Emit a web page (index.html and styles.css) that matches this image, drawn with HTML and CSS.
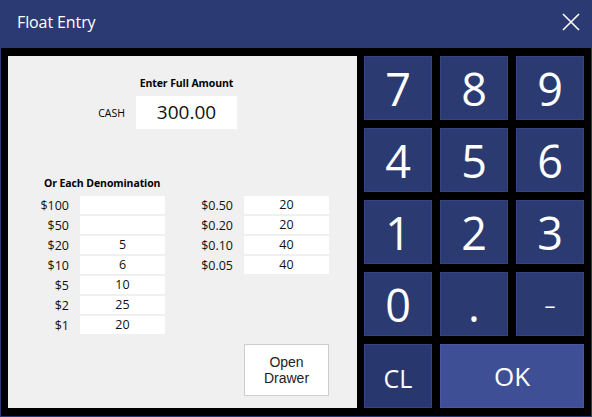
FILE: index.html
```html
<!DOCTYPE html>
<html>
<head>
<meta charset="utf-8">
<link rel="stylesheet" href="styles.css">
</head>
<body>
<div class="window">
  <div class="titlebar">
    <span class="title">Float Entry</span>
    <svg class="close" width="18" height="18" viewBox="0 0 18 18"><path d="M1 1 L17 17 M17 1 L1 17" stroke="#fff" stroke-width="1.6" fill="none"/></svg>
  </div>
  <div class="body">
    <div class="panel">
      <div class="full">
        <div></div>
        <div class="heading center">Enter Full Amount</div>
        <div class="cash-label">CASH</div>
        <div class="cash-input">300.00</div>
      </div>
      <div class="heading denom-heading">Or Each Denomination</div>
      <div class="denoms">
        <div class="denom-grid left">
          <div class="lbl">$100</div><div class="inp"></div>
          <div class="lbl">$50</div><div class="inp"></div>
          <div class="lbl">$20</div><div class="inp">5</div>
          <div class="lbl">$10</div><div class="inp">6</div>
          <div class="lbl">$5</div><div class="inp">10</div>
          <div class="lbl">$2</div><div class="inp">25</div>
          <div class="lbl">$1</div><div class="inp">20</div>
        </div>
        <div class="denom-grid right">
          <div class="lbl">$0.50</div><div class="inp">20</div>
          <div class="lbl">$0.20</div><div class="inp">20</div>
          <div class="lbl">$0.10</div><div class="inp">40</div>
          <div class="lbl">$0.05</div><div class="inp">40</div>
        </div>
      </div>
      <div class="drawer-btn">Open<br>Drawer</div>
    </div>
    <div class="keypad">
      <div class="key">7</div>
      <div class="key">8</div>
      <div class="key">9</div>
      <div class="key">4</div>
      <div class="key">5</div>
      <div class="key">6</div>
      <div class="key">1</div>
      <div class="key">2</div>
      <div class="key">3</div>
      <div class="key">0</div>
      <div class="key">.</div>
      <div class="key minus">–</div>
      <div class="key cl">CL</div>
      <div class="key ok">OK</div>
    </div>
  </div>
</div>
</body>
</html>
```

FILE: styles.css
```css
html, body {
  margin: 0;
  padding: 0;
  background: #000;
}
.window {
  width: 592px;
  height: 417px;
  display: flex;
  flex-direction: column;
  font-family: "Open Sans", "Noto Sans", sans-serif;
}
.titlebar {
  height: 48px;
  background: #2c3a73;
  display: flex;
  align-items: center;
  justify-content: space-between;
  padding: 0 12px 0 17px;
  box-sizing: border-box;
  flex: none;
}
.title {
  color: #fff;
  font-size: 16px;
  letter-spacing: -0.1px;
  margin-top: -4px;
}
.close {
  margin-top: -5px;
}
.body {
  flex: 1;
  display: flex;
  gap: 7px;
  padding: 8px 7px 8px 7px;
  border: 1px solid #2c3a73;
  border-top: none;
  background: #000;
}
.panel {
  width: 349px;
  height: 352px;
  background: #f0f0f0;
  display: flex;
  flex-direction: column;
  color: #000;
}
.heading {
  font-weight: bold;
  font-size: 10.5px;
  line-height: 14px;
  letter-spacing: -0.1px;
}
.center {
  text-align: center;
}
.full {
  display: grid;
  grid-template-columns: 117px 101px;
  column-gap: 11px;
  row-gap: 6px;
  margin-top: 20px;
  align-items: center;
}
.cash-label {
  font-size: 10.5px;
  text-align: right;
}
.cash-input {
  background: #fff;
  height: 33px;
  line-height: 33px;
  font-size: 19px;
  text-align: center;
  color: #111;
}
.denom-heading {
  margin-top: 47px;
  margin-left: 36px;
  margin-bottom: 6px;
}
.denoms {
  display: flex;
  align-items: flex-start;
}
.denom-grid {
  display: grid;
  column-gap: 11px;
  row-gap: 2px;
  grid-auto-rows: 18px;
  align-items: center;
  font-size: 12.5px;
}
.denom-grid.left {
  grid-template-columns: 61px 85px;
}
.denom-grid.right {
  grid-template-columns: 68px 85px;
}
.lbl {
  text-align: right;
  color: #111;
}
.inp {
  background: #fff;
  height: 18px;
  line-height: 18px;
  text-align: center;
  color: #111;
}
.drawer-btn {
  margin-top: 10px;
  margin-left: 236px;
  width: 85px;
  height: 52px;
  box-sizing: border-box;
  background: #fff;
  border: 1px solid #cdcdcd;
  display: flex;
  align-items: center;
  justify-content: center;
  text-align: center;
  font-family: "Liberation Sans", Arial, sans-serif;
  font-size: 14px;
  line-height: 16px;
  color: #222;
}
.keypad {
  display: grid;
  grid-template-columns: repeat(3, 68px);
  grid-auto-rows: 64px;
  gap: 8px;
}
.key {
  background: #2c3a72;
  border: 1px solid #36457f;
  box-sizing: border-box;
  color: #fff;
  font-size: 45px;
  display: flex;
  align-items: center;
  justify-content: center;
  line-height: 1;
}
.key.minus {
  font-size: 22px;
}
.key.cl {
  background: #29376f;
  font-size: 25px;
  padding-top: 4px;
}
.key.ok {
  grid-column: span 2;
  background: #3f4f95;
  border-color: #4757a0;
  font-size: 26px;
}
```
